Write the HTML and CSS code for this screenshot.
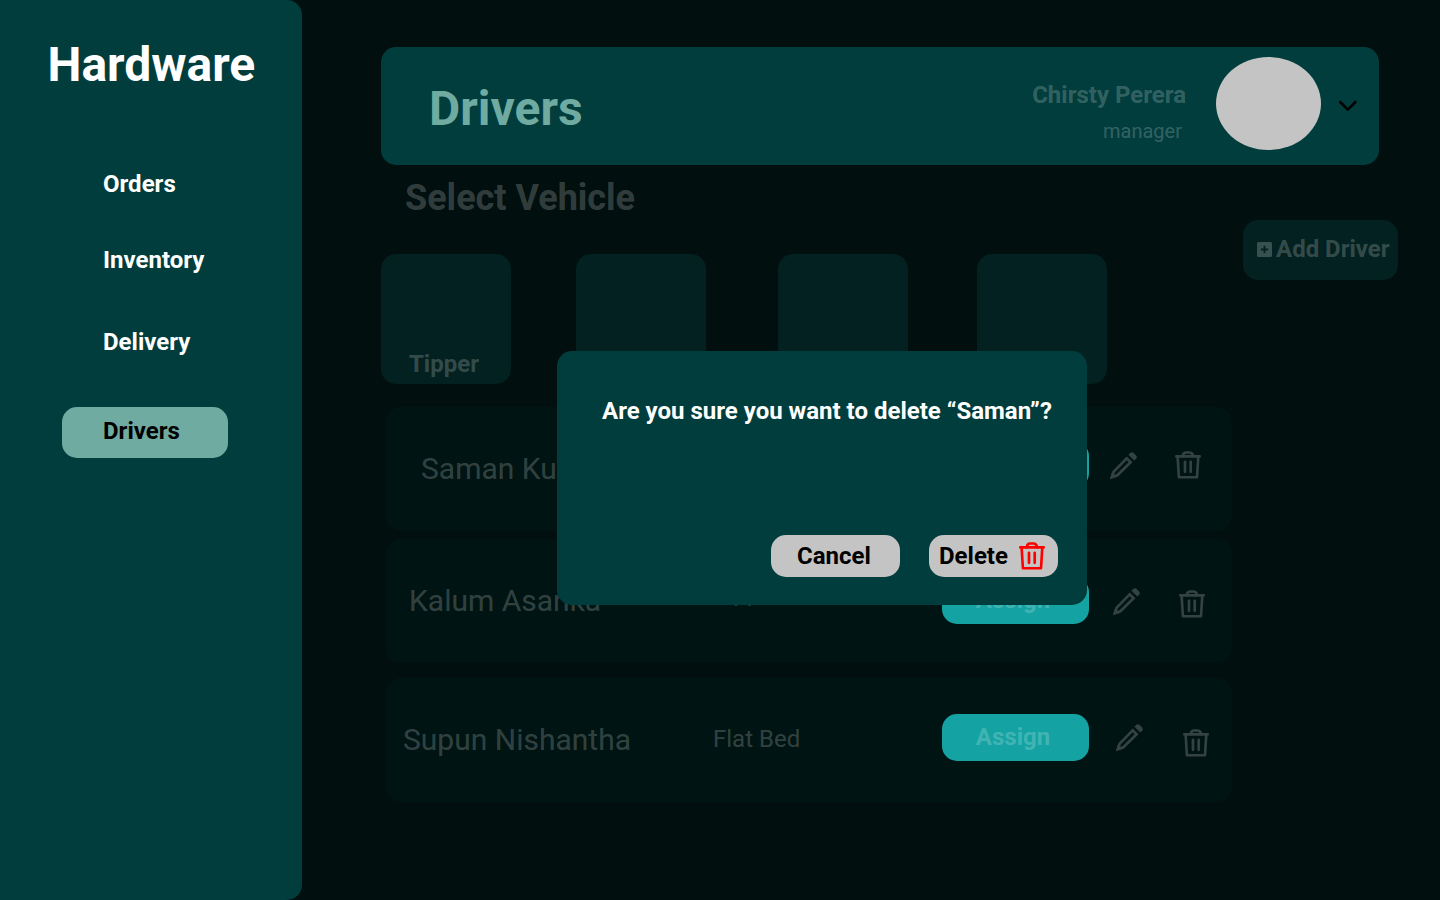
FILE: index.html
```html
<!DOCTYPE html>
<html lang="en">
<head>
<meta charset="utf-8">
<title>Drivers</title>
<link rel="stylesheet" href="styles.css">
</head>
<body>
<svg class="sprite" width="0" height="0">
  <symbol id="trash" viewBox="0 0 26 28">
    <g fill="none" stroke="currentColor" stroke-width="2.6" stroke-linejoin="round" stroke-linecap="round">
      <path d="M1.3 5.4H24.7"/>
      <path d="M8 5.2V4.2Q8.5 1.5 11 1.5H14.6Q17.1 1.5 17.8 4.2V5.2"/>
      <path d="M2.6 5.4L3.9 26.2H22L23.3 5.4"/>
      <path stroke-width="2.7" d="M10 10.8V20.8M15.7 10.8V20.8"/>
    </g>
  </symbol>
  <symbol id="pencil" viewBox="0 0 27 27">
    <path fill="none" stroke="currentColor" stroke-width="2.7" d="M1.9 25.1L3.7 19.6L16.7 6.4L20.6 10.2L7.4 23.3Z"/>
    <path fill="currentColor" d="M0.2 26.8L1.9 20.4L6.6 24.9ZM18.4 2.8L20.4 .8Q22.1-.5 23.8 1.1L25.9 3.2Q27.6 4.9 26.3 6.5L24.3 8.6Z"/>
  </symbol>
</svg>
<div class="app">
  <aside class="sidebar">
    <div class="brand">Hardware</div>
    <nav class="nav">
      <a class="nav-item">Orders</a>
      <a class="nav-item inventory">Inventory</a>
      <a class="nav-item delivery">Delivery</a>
      <a class="nav-item active">Drivers</a>
    </nav>
  </aside>
  <main class="main">
    <header class="header">
      <h1 class="title">Drivers</h1>
      <div class="user">
        <div class="user-name">Chirsty Perera</div>
        <div class="user-role">manager</div>
      </div>
      <div class="avatar"></div>
      <svg class="chevron" width="20" height="12" viewBox="0 0 20 12"><path d="M2.2 2L9.8 9.6L17.4 2" fill="none" stroke="#000" stroke-width="2.5" stroke-linecap="round" stroke-linejoin="round"/></svg>
    </header>
    <section class="vehicles">
      <div>
        <h2 class="subtitle">Select Vehicle</h2>
        <div class="cards">
          <div class="card">Tipper</div>
          <div class="card second"></div>
          <div class="card third"></div>
          <div class="card fourth"></div>
        </div>
      </div>
      <button class="add">
        <svg width="15" height="15" viewBox="0 0 15 15"><path fill="currentColor" fill-rule="evenodd" d="M1.5 0H13.5Q15 0 15 1.5V13.5Q15 15 13.5 15H1.5Q0 15 0 13.5V1.5Q0 0 1.5 0ZM6.6 3.8V6.6H3.8V8.4H6.6V11.2H8.4V8.4H11.2V6.6H8.4V3.8Z"/></svg>
        <span>Add Driver</span>
      </button>
    </section>
    <section class="list">
      <div class="row saman">
        <span class="name">Saman Kumara</span><span class="type"></span>
        <button class="assign">Assign</button>
        <svg class="pencil"><use href="#pencil"/></svg>
        <svg class="trash"><use href="#trash"/></svg>
      </div>
      <div class="row kalum">
        <span class="name">Kalum Asanka</span><span class="type">Tipper</span>
        <button class="assign">Assign</button>
        <svg class="pencil"><use href="#pencil"/></svg>
        <svg class="trash"><use href="#trash"/></svg>
      </div>
      <div class="row supun">
        <span class="name">Supun Nishantha</span><span class="type">Flat Bed</span>
        <button class="assign">Assign</button>
        <svg class="pencil"><use href="#pencil"/></svg>
        <svg class="trash"><use href="#trash"/></svg>
      </div>
    </section>
  </main>
</div>
<div class="modal" role="dialog">
  <p class="question">Are you sure you want to delete “Saman”?</p>
  <div class="actions">
    <button class="btn cancel">Cancel</button>
    <button class="btn delete">Delete<svg class="trash"><use href="#trash"/></svg></button>
  </div>
</div>
</body>
</html>
```
FILE: styles.css
```css
* { box-sizing: border-box; }
body {
  margin: 0;
  background: #010f0e;
  font-family: Roboto, "Liberation Sans", sans-serif;
  overflow: hidden;
}
button { border: 0; padding: 0; font-family: inherit; color: inherit; }
.sprite { position: absolute; }
.app { display: flex; width: 1440px; height: 900px; }

.sidebar {
  flex: none;
  width: 302px;
  height: 900px;
  padding-top: 37px;
  background: #013d3c;
  border-radius: 0 15px 15px 0;
  color: #fff;
}
.brand { padding-left: 47.5px; font-size: 48px; line-height: 56px; font-weight: 700; }
.nav { display: flex; flex-direction: column; padding: 77px 0 0 62px; }
.nav-item {
  width: 166px;
  padding-left: 41px;
  font-size: 24px;
  line-height: 28px;
  font-weight: 700;
}
.inventory { margin-top: 48px; }
.delivery { margin-top: 54px; }
.active {
  height: 51px;
  margin-top: 51px;
  padding-top: 10px;
  background: #6faba1;
  border-radius: 15px;
  color: #000;
}

.main { flex: 1; padding: 47px 0 0 79px; color: rgba(255, 255, 255, .21); }
.header {
  display: flex;
  width: 998px;
  height: 118px;
  padding: 10px 21px 0 48px;
  background: #013d3c;
  border-radius: 15px;
}
.title {
  margin: 24px auto 0 0;
  font-size: 48px;
  line-height: 56px;
  font-weight: 700;
  color: #6faba1;
}
.user { padding-top: 24px; text-align: right; }
.user-name { font-size: 24px; line-height: 28px; font-weight: 700; }
.user-role { padding: 11px 4px 0 0; font-size: 20px; line-height: 23px; font-weight: 400; }
.avatar { width: 105px; height: 93px; margin-left: 30px; border-radius: 50%; background: #c4c4c4; }
.chevron { margin: 43px 0 0 17px; }

.vehicles { display: flex; height: 219px; }
.subtitle { margin: 12px 0 35px 24px; font-size: 36px; line-height: 42px; font-weight: 700; }
.cards { display: flex; }
.card {
  width: 130px;
  height: 130px;
  padding: 96px 0 0 28px;
  background: #032120;
  border-radius: 15px;
  font-size: 24px;
  line-height: 28px;
  font-weight: 700;
}
.second { margin-left: 65px; }
.third { margin-left: 72px; }
.fourth { margin-left: 69px; }
.add {
  display: flex;
  align-items: center;
  gap: 4px;
  width: 155px;
  height: 60px;
  margin: 55px 0 0 136px;
  padding: 0 0 1px 14px;
  background: #032120;
  border-radius: 15px;
  font-size: 24px;
  line-height: 28px;
  font-weight: 700;
  white-space: nowrap;
}
.add span { margin-top: -1px; }

.list { padding: 23px 0 0 5px; }
.row {
  display: grid;
  grid-template-columns: 327px 229px 147px 27px 26px;
  align-items: start;
  width: 846px;
  height: 124px;
  background: #001513;
  border-radius: 15px;
}
.kalum { margin-top: 8px; }
.supun { margin-top: 15px; }
.name { font-size: 30px; line-height: 35px; white-space: nowrap; }
.type { font-size: 24px; line-height: 28px; }
.assign {
  height: 47px;
  padding: 0 5px 1px 0;
  background: #14a2a2;
  border-radius: 15px;
  font-size: 24px;
  line-height: 28px;
  font-weight: 700;
}
.pencil { width: 27px; height: 27px; color: #344342; }
.trash { width: 26px; height: 28px; color: #344342; }
.saman .name { margin: 44px 0 0 35px; }
.saman .assign { margin-top: 34px; }
.saman .pencil { margin: 45px 0 0 21px; }
.saman .trash { margin: 44px 0 0 59px; }
.kalum .name { margin: 44px 0 0 23px; }
.kalum .type { margin-top: 40px; }
.kalum .assign { margin-top: 38px; }
.kalum .pencil { margin: 49px 0 0 24px; }
.kalum .trash { margin: 51px 0 0 63px; }
.supun .name { margin: 44px 0 0 17px; }
.supun .type { margin-top: 47px; }
.supun .assign { margin-top: 36px; }
.supun .pencil { margin: 46px 0 0 27px; }
.supun .trash { margin: 51px 0 0 67px; }

/* Confirmation dialog over the page */
.modal {
  position: absolute;
  left: 557px;
  top: 351px;
  width: 530px;
  height: 254px;
  padding: 46px 29px 28px 45px;
  display: flex;
  flex-direction: column;
  justify-content: space-between;
  background: #013d3c;
  border-radius: 15px;
}
.question { margin: 0; color: #fff; font-size: 24px; line-height: 28px; font-weight: 700; white-space: nowrap; }
.actions { display: flex; justify-content: flex-end; gap: 29px; }
.btn {
  display: flex;
  width: 129px;
  height: 42px;
  padding-top: 7px;
  background: #c4c4c4;
  border-radius: 15px;
  color: #000;
  font-size: 24px;
  line-height: 28px;
  font-weight: 700;
}
.cancel { padding-left: 26px; }
.delete { padding-left: 10px; }
.delete .trash { flex: none; margin-left: 11px; color: #f00; }
```
